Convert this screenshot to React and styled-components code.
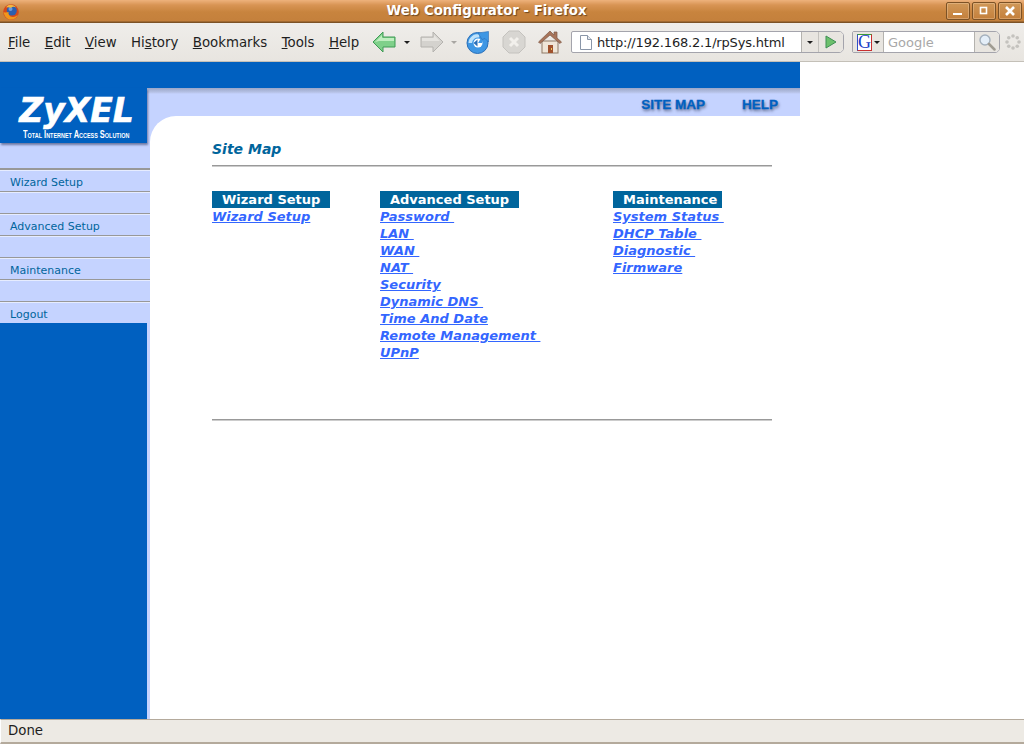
import React from "react";
import styled, { createGlobalStyle } from "styled-components";

const GlobalStyle = createGlobalStyle`
  html, body {
    margin: 0;
    padding: 0;
    background: #fff;
    overflow: hidden;
  }
  * {
    box-sizing: border-box;
  }
`;

const stripBackground = "linear-gradient(#9aa6c8 0, #b4c0e4 4px, #c5d3ff 6px)";

const wizard = ["Wizard Setup"];
const advanced = [
  "Password\u00a0",
  "LAN\u00a0",
  "WAN\u00a0",
  "NAT\u00a0",
  "Security",
  "Dynamic DNS\u00a0",
  "Time And Date",
  "Remote Management\u00a0",
  "UPnP",
];
const maintenance = ["System Status\u00a0", "DHCP Table\u00a0", "Diagnostic\u00a0", "Firmware"];

function FirefoxLogo() {
  return (
    <svg width="16" height="16" viewBox="0 0 16 16">
      <circle cx="8" cy="8" r="7.8" fill="#d4491c" />
      <circle cx="8.800" cy="6.600" r="5" fill="#2c5fae" />
      <circle cx="7.500" cy="5" r="2" fill="#6f9bd8" />
      <path d="M.6 8c.4 4 3.400 7.600 7.400 7.600 3.400 0 6-2 7-5-1.500 1.800-3.500 2.700-5.500 2.400C6.500 12.600 5 10.500 5.600 8 4 8.500 2 8.800.6 8z" fill="#f0961c" />
      <path d="M3 3.500C4.500 1 7 .5 9 1c1.500.3 3 1.200 4 2.500-2-1-3.500-.8-5 .3C6.500 3.200 4.500 3 3 3.500z" fill="#f4b63e" />
    </svg>
  );
}

function BackIcon() {
  return (
    <svg width="24" height="22" viewBox="0 0 24 22">
      <path d="M1 11 11 1v5h12v10H11v5z" fill="#7fd08a" stroke="#3f9a55" strokeWidth="1" />
      <path d="M3 11 10 4v3h12v3H7z" fill="#c0eec0" />
    </svg>
  );
}

function ForwardIcon() {
  return (
    <svg width="24" height="22" viewBox="0 0 24 22">
      <path d="M23 11 13 1v5H1v10h12v5z" fill="#d4d2ce" stroke="#b4b2ae" strokeWidth="1" />
      <path d="M2 7h12V4l6 6H2z" fill="#e6e4e0" />
    </svg>
  );
}

function ReloadIcon() {
  return (
    <svg width="24" height="24" viewBox="0 0 24 24">
      <circle cx="11.500" cy="13" r="10.500" fill="#3f97e4" stroke="#2a6fb8" />
      <path d="M2.500 13A9 9 0 0 1 14 4.500l-1 3A6 6 0 0 0 6 13z" fill="#bfe2fa" />
      <circle cx="12" cy="13" r="4.500" fill="#fff" />
      <path d="M12 13h4l1-4-2-1z" fill="#3f97e4" />
      <path d="M12 3 22.500 1.500V12L19 8.500l-3 1z" fill="#3f97e4" stroke="#2a6fb8" strokeWidth="0.6" />
      <path d="M7.500 13l4-3.500v7z" fill="#2a6fb8" />
    </svg>
  );
}

function StopIcon() {
  return (
    <svg width="24" height="24" viewBox="0 0 24 24">
      <path d="M7 1h10l6 6v10l-6 6H7l-6-6V7z" fill="#d8d6d2" stroke="#c4c2be" />
      <path d="M8 8l8 8M16 8l-8 8" stroke="#f2f0ec" strokeWidth="3" />
    </svg>
  );
}

function HomeIcon() {
  return (
    <svg width="24" height="24" viewBox="0 0 24 24">
      <rect x="4" y="11" width="16" height="12" fill="#efe6d8" stroke="#8f7a66" />
      <path d="M0.500 12 12 1l4 4V2h3v6l4.500 4-1.500 1.500L12 5 2 13.500z" fill="#a8745a" stroke="#7c5a48" strokeWidth="0.7" />
      <rect x="10" y="15" width="5" height="8" fill="#a0522d" />
      <rect x="13" y="18" width="1" height="2" fill="#f0d060" />
    </svg>
  );
}

function PageIcon() {
  return (
    <svg width="12" height="15" viewBox="0 0 12 15">
      <path d="M0.500 0.500h7l4 4v10h-11z" fill="#fff" stroke="#8a96a8" />
      <path d="M7.500 0.500v4h4" fill="#e4e8ee" stroke="#8a96a8" />
    </svg>
  );
}

function GoIcon() {
  return (
    <svg width="12" height="14" viewBox="0 0 12 14">
      <path d="M1 1l10 6-10 6z" fill="#6cc06c" stroke="#3f8f55" />
    </svg>
  );
}

function SearchGlass() {
  return (
    <svg width="18" height="18" viewBox="0 0 18 18">
      <circle cx="7" cy="7" r="5" fill="#e4eef8" stroke="#a4b0bc" strokeWidth="1.400" />
      <path d="M11 11l5.500 5.500" stroke="#a09c92" strokeWidth="2.500" strokeLinecap="round" />
    </svg>
  );
}

function Throbber() {
  const dots = [0, 45, 90, 135, 180, 225, 270, 315];
  return (
    <svg width="16" height="16" viewBox="0 0 16 16">
      {dots.map((a) => (
        <circle
          key={a}
          cx={8 + 6 * Math.cos((a * Math.PI) / 180)}
          cy={8 + 6 * Math.sin((a * Math.PI) / 180)}
          r="1.800"
          fill="#c4c2be"
        />
      ))}
    </svg>
  );
}

function WinIcon({ kind }) {
  return (
    <svg width="12" height="12" viewBox="0 0 12 12">
      {kind === "min" && <rect x="1" y="8" width="9" height="2" fill="#fff" />}
      {kind === "max" && <rect x="2.500" y="2.500" width="6" height="6" fill="none" stroke="#fff" strokeWidth="1.600" />}
      {kind === "close" && <path d="M2 2l8 8M10 2l-8 8" stroke="#fff" strokeWidth="2.600" />}
    </svg>
  );
}

function LinkColumn({ title, links, width, pad }) {
  return (
    <Column $width={width}>
      <ColumnTitle $pad={pad}>{title}</ColumnTitle>
      {links.map((l) => (
        <SiteLink key={l} href="#">
          {l}
        </SiteLink>
      ))}
    </Column>
  );
}

export default function App() {
  return (
    <Window>
      <GlobalStyle />
      <TitleBar>
        <TitleIcon>
          <FirefoxLogo />
        </TitleIcon>
        <TitleText>Web Configurator - Firefox</TitleText>
        <WinButtons>
          <WinButton><WinIcon kind="min" /></WinButton>
          <WinButton><WinIcon kind="max" /></WinButton>
          <WinButton><WinIcon kind="close" /></WinButton>
        </WinButtons>
      </TitleBar>

      <Toolbar>
        <Menu>
          <MenuItem><u>F</u>ile</MenuItem>
          <MenuItem><u>E</u>dit</MenuItem>
          <MenuItem><u>V</u>iew</MenuItem>
          <MenuItem>Hi<u>s</u>tory</MenuItem>
          <MenuItem><u>B</u>ookmarks</MenuItem>
          <MenuItem><u>T</u>ools</MenuItem>
          <MenuItem><u>H</u>elp</MenuItem>
        </Menu>
        <NavIcons>
          <NavSlot><BackIcon /></NavSlot>
          <Caret $gap={8} />
          <NavSlot $left={2}><ForwardIcon /></NavSlot>
          <Caret $gap={7} $off />
          <NavSlot $left={2}><ReloadIcon /></NavSlot>
          <NavSlot $left={12}><StopIcon /></NavSlot>
          <NavSlot $left={12}><HomeIcon /></NavSlot>
        </NavIcons>
        <UrlBar>
          <UrlIcon><PageIcon /></UrlIcon>
          <UrlText>http://192.168.2.1/rpSys.html</UrlText>
          <UrlDrop><Caret /></UrlDrop>
          <UrlGo><GoIcon /></UrlGo>
        </UrlBar>
        <SearchBar>
          <Engine>
            <EngineG>G</EngineG>
            <Caret $gap={2} />
          </Engine>
          <SearchInput>Google</SearchInput>
          <SearchButton><SearchGlass /></SearchButton>
        </SearchBar>
        <ThrobberBox><Throbber /></ThrobberBox>
      </Toolbar>

      <Viewport>
        <Frame>
          <TopBand />
          <FrameBody>
            <Sidebar>
              <Logo>
                <LogoName>ZyXEL</LogoName>
                <LogoTag>Total Internet Access Solution</LogoTag>
              </Logo>
              <LogoGap />
              <NavItem>Wizard Setup</NavItem>
              <NavItem />
              <NavItem>Advanced Setup</NavItem>
              <NavItem />
              <NavItem>Maintenance</NavItem>
              <NavItem />
              <NavItem>Logout</NavItem>
              <SideFill />
            </Sidebar>
            <Main>
              <HeaderStrip>
                <HeaderLink>SITE MAP</HeaderLink>
                <HeaderLink>HELP</HeaderLink>
              </HeaderStrip>
              <Content>
                <Heading>Site Map</Heading>
                <Rule />
                <Columns>
                  <LinkColumn title="Wizard Setup" links={wizard} width={168} pad={10} />
                  <LinkColumn title="Advanced Setup" links={advanced} width={233} pad={10} />
                  <LinkColumn title="Maintenance" links={maintenance} pad={5} />
                </Columns>
                <Rule />
              </Content>
            </Main>
          </FrameBody>
        </Frame>
      </Viewport>

      <StatusBar>Done</StatusBar>
    </Window>
  );
}

const Window = styled.div`
  width: 1024px;
  height: 744px;
  display: flex;
  flex-direction: column;
  font-family: "DejaVu Sans", sans-serif;
  background: #fff;
`;

const TitleBar = styled.div`
  height: 23px;
  flex: none;
  display: flex;
  align-items: center;
  padding: 0 2px 0 3px;
  background: linear-gradient(#eeb27c 0, #d89454 5px, #c8843e 12px, #c4803c 21px, #7c5226 22px);
`;

const TitleIcon = styled.div`
  width: 16px;
  height: 16px;
  flex: none;
`;

const TitleText = styled.div`
  flex: 1;
  text-align: center;
  padding-left: 8px;
  font-size: 13.33px;
  font-weight: bold;
  color: #fff;
  text-shadow: 1px 1px 1px #6c4620;
  margin-top: -3px;
`;

const WinButtons = styled.div`
  display: flex;
  gap: 2px;
  margin-top: -2px;
`;

const WinButton = styled.div`
  width: 24px;
  height: 18px;
  border: 1px solid #7c5226;
  border-radius: 2px;
  background: linear-gradient(#d09858, #c4803c);
  box-shadow: inset 0 0 0 1px rgba(255, 230, 200, 0.3);
  display: flex;
  align-items: center;
  justify-content: center;
`;

const Toolbar = styled.div`
  height: 39px;
  flex: none;
  display: flex;
  align-items: center;
  padding: 0 3px 0 8px;
  background: linear-gradient(#efedea, #e8e5e0);
  border-bottom: 1px solid #c4c0b8;
`;

const Menu = styled.div`
  display: flex;
  gap: 14.4px;
  width: 364px;
  flex: none;
`;

const MenuItem = styled.span`
  font-size: 13.33px;
  color: #1e1e1e;
`;

const NavIcons = styled.div`
  width: 199px;
  flex: none;
  display: flex;
  align-items: center;
`;

const NavSlot = styled.span`
  display: flex;
  flex: none;
  margin-left: ${(p) => p.$left || 0}px;
`;

const Caret = styled.span`
  display: inline-block;
  flex: none;
  width: 0;
  height: 0;
  border-left: 3px solid transparent;
  border-right: 3px solid transparent;
  border-top: 3px solid ${(p) => (p.$off ? "#a8a6a2" : "#1e1e1e")};
  margin: 0 ${(p) => p.$gap || 0}px;
`;

const UrlBar = styled.div`
  width: 273px;
  height: 22px;
  flex: none;
  display: flex;
  align-items: stretch;
  background: #fff;
  border: 1px solid #a4a4ac;
  border-radius: 2px 5px 5px 2px;
  margin-right: 8px;
`;

const UrlIcon = styled.div`
  width: 25px;
  display: flex;
  align-items: center;
  justify-content: center;
  padding-left: 2px;
`;

const UrlText = styled.div`
  flex: 1;
  font-size: 13px;
  line-height: 22px;
  letter-spacing: -0.18px;
  color: #1e1e1e;
`;

const UrlDrop = styled.div`
  width: 17px;
  display: flex;
  align-items: center;
  justify-content: center;
  background: #e8e5e0;
  border-left: 1px solid #b4b2ae;
  color: #555;
`;

const UrlGo = styled.div`
  width: 25px;
  display: flex;
  align-items: center;
  justify-content: center;
  background: #e8e5e0;
  border-left: 1px solid #c4c2be;
  border-radius: 0 4px 4px 0;
`;

const SearchBar = styled.div`
  width: 148px;
  height: 22px;
  flex: none;
  display: flex;
  align-items: stretch;
  border: 1px solid #a4a4ac;
  border-radius: 2px 5px 5px 2px;
  background: #fff;
`;

const Engine = styled.div`
  width: 31px;
  flex: none;
  display: flex;
  align-items: center;
  padding-left: 4px;
  background: #e8e5e0;
  border-right: 1px solid #b4b2ae;
`;

const EngineG = styled.span`
  width: 15px;
  height: 17px;
  flex: none;
  font-family: "Liberation Serif", serif;
  font-size: 18px;
  line-height: 15px;
  text-align: center;
  color: #2040c8;
  background: #fff;
  border: 1px solid;
  border-color: #3a9a3a #c83030 #c83030 #3050c8;
`;

const SearchInput = styled.div`
  flex: 1;
  font-size: 13px;
  line-height: 22px;
  color: #a8a8a8;
  padding-left: 4px;
`;

const SearchButton = styled.div`
  width: 25px;
  flex: none;
  display: flex;
  align-items: center;
  justify-content: center;
  background: #e8e5e0;
  border-left: 1px solid #b4b2ae;
  border-radius: 0 4px 4px 0;
`;

const ThrobberBox = styled.div`
  margin-left: 5px;
  height: 16px;
`;

const Viewport = styled.div`
  flex: 1;
  min-height: 0;
  background: #fff;
`;

const Frame = styled.div`
  width: 800px;
  height: 100%;
  display: flex;
  flex-direction: column;
`;

const TopBand = styled.div`
  height: 26px;
  flex: none;
  background: #0060c0;
`;

const FrameBody = styled.div`
  flex: 1;
  min-height: 0;
  display: flex;
`;

const Sidebar = styled.div`
  width: 150px;
  flex: none;
  display: flex;
  flex-direction: column;
  background: ${stripBackground};
`;

const Logo = styled.div`
  width: 147px;
  height: 55px;
  flex: none;
  background: #0060c0;
  color: #fff;
  box-shadow: 1px 2px 2px rgba(40, 50, 90, 0.55);
  display: flex;
  flex-direction: column;
  align-items: center;
  padding: 5px 0 0 6px;
`;

const LogoName = styled.div`
  font-size: 33px;
  font-weight: bold;
  font-style: italic;
  line-height: 36px;
  -webkit-text-stroke: 0.6px #fff;
`;

const LogoTag = styled.div`
  font-family: "Liberation Sans", sans-serif;
  font-size: 11px;
  font-weight: bold;
  font-variant: small-caps;
  line-height: 10px;
  white-space: nowrap;
  transform: scaleX(0.68);
`;

const LogoGap = styled.div`
  height: 26px;
  flex: none;
  border-bottom: 1px solid #989898;
`;

const NavItem = styled.div`
  height: 22px;
  flex: none;
  font-size: 11px;
  line-height: 25px;
  padding-left: 10px;
  color: #00659c;
  border-top: 1px solid #989898;
  box-shadow: inset 0 1px 0 #e6ecff;
`;

const SideFill = styled.div`
  flex: 1;
  width: 147px;
  background: #0060c0;
`;

const Main = styled.div`
  flex: 1;
  min-width: 0;
  display: flex;
  flex-direction: column;
  background: #c5d3ff;
`;

const HeaderStrip = styled.div`
  height: 28px;
  flex: none;
  display: flex;
  justify-content: flex-end;
  align-items: center;
  gap: 37px;
  padding: 4px 22px 0 0;
  background: ${stripBackground};
`;

const HeaderLink = styled.span`
  font-family: "Liberation Sans", sans-serif;
  font-size: 13.5px;
  font-weight: bold;
  color: #0060c0;
  -webkit-text-stroke: 0.3px #0060c0;
  text-shadow: 1px 2px 3px rgba(30, 40, 70, 0.65);
`;

const Content = styled.div`
  flex: 1;
  min-height: 0;
  background: #fff;
  border-top-left-radius: 26px;
  padding: 24px 28px 0 62px;
`;

const Heading = styled.div`
  font-size: 14px;
  line-height: 18px;
  font-weight: bold;
  font-style: italic;
  color: #00659c;
  margin-bottom: 7px;
`;

const Rule = styled.div`
  height: 2px;
  background: #999;
  border-bottom: 1px solid #ccc;
`;

const Columns = styled.div`
  display: flex;
  height: 252px;
  padding-top: 24px;
`;

const Column = styled.div`
  width: ${(p) => (p.$width ? `${p.$width}px` : "auto")};
  display: flex;
  flex-direction: column;
  align-items: flex-start;
`;

const ColumnTitle = styled.div`
  height: 17px;
  font-size: 13px;
  line-height: 17px;
  font-weight: bold;
  color: #fff;
  background: #00659c;
  padding: 0 ${(p) => p.$pad}px 0 10px;
`;

const SiteLink = styled.a`
  height: 17px;
  font-size: 13px;
  line-height: 17px;
  font-weight: bold;
  font-style: italic;
  color: #3366ff;
  text-decoration: underline;
  white-space: pre;
`;

const StatusBar = styled.div`
  height: 25px;
  flex: none;
  font-size: 13.33px;
  line-height: 21px;
  padding-left: 7px;
  color: #1e1e1e;
  background: #edeae4;
  border-top: 1px solid #b4aa9c;
  border-left: 1px solid #fff;
  border-bottom: 2px solid #b4aa9c;
`;
